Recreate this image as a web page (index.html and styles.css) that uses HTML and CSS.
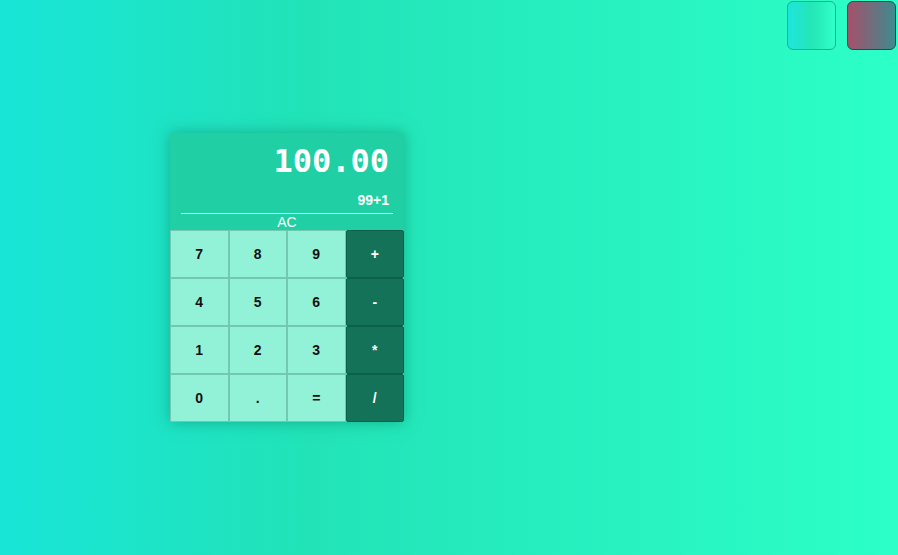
FILE: index.html
```html
<!DOCTYPE html>
<html>
<head>
<meta charset="utf-8">
<link rel="stylesheet" href="styles.css">
</head>
<body>
<div class="page">
  <div class="themes">
    <button class="swatch swatch-light"></button>
    <button class="swatch swatch-dark"></button>
  </div>
  <div class="calc">
    <div class="display">
      <div class="result">100.00</div>
      <div class="expr">99+1</div>
      <div class="clear">AC</div>
    </div>
    <div class="keys">
      <button class="key">7</button><button class="key">8</button><button class="key">9</button><button class="key op">+</button>
      <button class="key">4</button><button class="key">5</button><button class="key">6</button><button class="key op">-</button>
      <button class="key">1</button><button class="key">2</button><button class="key">3</button><button class="key op">*</button>
      <button class="key">0</button><button class="key">.</button><button class="key">=</button><button class="key op">/</button>
    </div>
  </div>
</div>
</body>
</html>
```
FILE: styles.css
```css
html, body {
  margin: 0;
  height: 100%;
}
body {
  background: linear-gradient(to right, #18e5d7 0%, #22e3b8 34%, #2cffc7 100%);
  font-family: "Liberation Sans", Arial, sans-serif;
}
.page {
  display: flex;
  flex-direction: column;
  height: 100%;
}
.themes {
  display: flex;
  justify-content: flex-end;
  gap: 11px;
  padding: 1px 2px 0 0;
}
.swatch {
  width: 49px;
  height: 49px;
  border-radius: 6px;
  padding: 0;
  cursor: pointer;
}
.swatch-light {
  background: linear-gradient(to right, #1ee5dd, #24e6b6 50%, #30ffc8);
  border: 1px solid #1fae93;
}
.swatch-dark {
  background: linear-gradient(to right, #a6506a, #3d8b8f);
  border: 1px solid #1f4d4a;
}
.calc {
  margin: 83px 0 0 170px;
  width: 234px;
  box-shadow: 0 0 14px rgba(10, 120, 90, 0.5);
}
.display {
  background: #21cfa4;
  padding: 8px 15px 0 10px;
  color: #fff;
}
.result {
  font-family: "DejaVu Sans Mono", monospace;
  font-weight: bold;
  font-size: 32px;
  line-height: 40px;
  text-align: right;
  height: 44px;
}
.expr {
  font-weight: bold;
  font-size: 14px;
  line-height: 20px;
  text-align: right;
  margin-top: 5px;
}
.clear {
  margin: 3px -4px 0 1px;
  border-top: 1px solid rgba(255, 255, 255, 0.75);
  text-align: center;
  font-size: 14px;
  line-height: 16px;
}
.keys {
  display: grid;
  grid-template-columns: repeat(4, 1fr);
  grid-auto-rows: 48px;
}
.key {
  background: #92f2d8;
  border: 1px solid #73c8b0;
  font-family: "Liberation Sans", Arial, sans-serif;
  font-weight: bold;
  font-size: 14px;
  color: #111;
  padding: 0;
  cursor: pointer;
}
.key.op {
  background: #137257;
  border-color: #0f5e48;
  border-radius: 2px;
  color: #fff;
}
```
